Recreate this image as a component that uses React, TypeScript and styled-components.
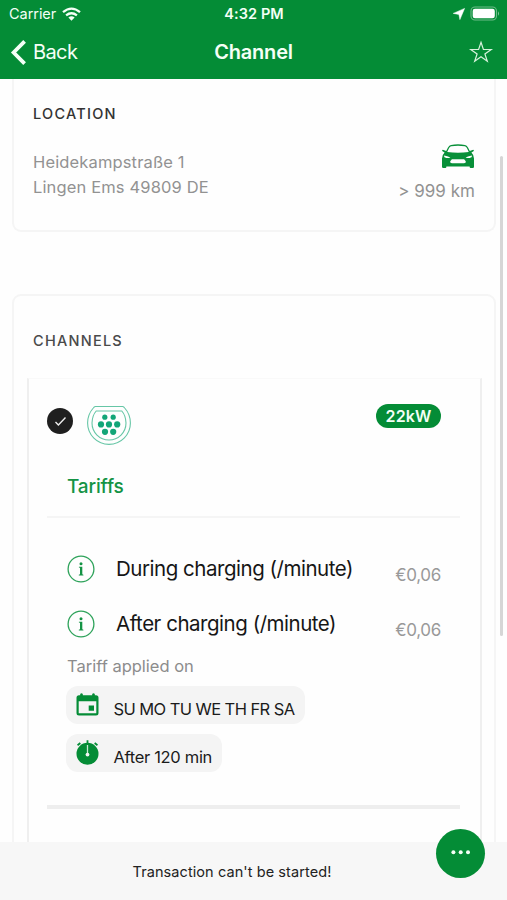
import React from "react";
import styled, { createGlobalStyle } from "styled-components";

const GREEN = "#048c36";

const GlobalStyle = createGlobalStyle`
  * { box-sizing: border-box; }
  body { margin: 0; background: #fff; font-family: Inter, "Liberation Sans", sans-serif; }
  svg { display: block; flex: none; overflow: visible; }
`;

const Screen = styled.div`
  position: relative;
  width: 507px;
  height: 900px;
  display: flex;
  flex-direction: column;
  overflow: hidden;
  background: #fefefe;
`;

const Header = styled.header`
  height: 79px;
  flex: none;
  background: ${GREEN};
  color: #f4fff6;
  display: flex;
  flex-direction: column;
`;

const StatusBar = styled.div`
  height: 27px;
  display: grid;
  grid-template-columns: 1fr auto 1fr;
  align-items: center;
  padding: 0 8px 0 9px;
`;

const Carrier = styled.div`
  display: flex;
  align-items: center;
  gap: 6px;
  font-size: 14.5px;
  line-height: 20px;
  letter-spacing: -0.05px;
`;

const Clock = styled.div`
  font-size: 14.5px;
  line-height: 20px;
  font-weight: 600;
  letter-spacing: 0.1px;
`;

const StatusIcons = styled.div`
  display: flex;
  justify-content: flex-end;
  align-items: center;
  gap: 5px;
`;

const NavBar = styled.nav`
  height: 50px;
  display: grid;
  grid-template-columns: 1fr auto 1fr;
  align-items: center;
  padding: 0 15px 0 11px;
`;

const BackButton = styled.div`
  display: flex;
  align-items: center;
  gap: 7px;
  font-size: 20px;
  line-height: 26px;
  letter-spacing: -0.6px;
`;

const NavTitle = styled.h1`
  margin: 0;
  padding-left: 4px;
  font-size: 20px;
  line-height: 26px;
  font-weight: 600;
  letter-spacing: -0.2px;
`;

const NavAction = styled.div`
  display: flex;
  justify-content: flex-end;
`;

const Content = styled.main`
  height: 763px;
  flex: none;
  overflow: hidden;
  padding: 0 11px 0 12px;
  display: flex;
  flex-direction: column;
`;

const Card = styled.section<{ $first?: boolean }>`
  flex: none;
  border: 2px solid #f5f5f5;
  border-radius: ${(p) => (p.$first ? "0 0 9px 9px" : "9px 9px 0 0")};
  border-top-width: ${(p) => (p.$first ? 0 : "2px")};
  height: ${(p) => (p.$first ? "153px" : "600px")};
  margin-bottom: ${(p) => (p.$first ? "62px" : 0)};
  padding-top: ${(p) => (p.$first ? "24px" : "34px")};
`;

const CardTitle = styled.h2<{ $soft?: boolean }>`
  margin: 0 0 0 19px;
  padding-top: 1px;
  font-size: 14.5px;
  line-height: 20px;
  font-weight: 500;
  letter-spacing: 1.25px;
  color: ${(p) => (p.$soft ? "#4a4a4a" : "#333")};
`;

const LocationRow = styled.div`
  display: flex;
  justify-content: space-between;
  padding: 20px 19px 0 19px;
`;

const Address = styled.address`
  font-style: normal;
  font-size: 16.5px;
  line-height: 24.5px;
  letter-spacing: 0.14px;
  color: #929292;
  padding-top: 6px;
`;

const Distance = styled.div`
  display: flex;
  flex-direction: column;
  align-items: flex-end;
  gap: 10px;
  font-size: 17px;
  line-height: 24px;
  letter-spacing: 0.02px;
  color: #929292;
`;

const Panel = styled.div`
  margin: 27px 12px 0 13px;
  height: 520px;
  border-left: 2px solid #efefef;
  border-right: 2px solid #efefef;
  border-top: 1px solid #f9f9f9;
  padding: 26px 20px 0 18px;
`;

const ChannelHead = styled.div`
  height: 69px;
  display: flex;
  align-items: flex-start;
  padding-right: 19px;
`;

const SelectedMark = styled.div`
  width: 26px;
  height: 26px;
  margin: 3px 14px 0 0;
  border-radius: 50%;
  background: #1f1f1f;
  display: flex;
  align-items: center;
  justify-content: center;
`;

const PowerBadge = styled.div`
  margin-left: auto;
  margin-top: -1px;
  width: 65px;
  height: 24px;
  border-radius: 12px;
  background: ${GREEN};
  color: #f4fff6;
  font-size: 16px;
  line-height: 24px;
  font-weight: 600;
  letter-spacing: 0.1px;
  text-align: center;
`;

const TariffTitle = styled.h3`
  margin: 0;
  padding-left: 20px;
  height: 44px;
  font-size: 19px;
  line-height: 26px;
  font-weight: 500;
  letter-spacing: -0.15px;
  color: #149344;
  border-bottom: 2px solid #f5f5f5;
`;

const TariffList = styled.div`
  padding-top: 23px;
`;

const TariffRow = styled.div`
  height: 55px;
  display: flex;
  align-items: center;
  padding: 0 19px 0 20px;
`;

const TariffName = styled.span`
  margin-left: 21px;
  font-size: 20.5px;
  line-height: 28px;
  letter-spacing: -0.47px;
  color: #161616;
  white-space: nowrap;
`;

const Price = styled.span`
  margin-left: auto;
  padding-top: 13px;
  font-size: 17px;
  line-height: 24px;
  letter-spacing: -0.3px;
  color: #999;
`;

const Applied = styled.p`
  margin: 3px 0 8px 20px;
  font-size: 16.5px;
  line-height: 24px;
  color: #8c8c8c;
`;

const Chip = styled.div<{ $w: number }>`
  width: ${(p) => p.$w}px;
  height: 38px;
  margin: 0 0 10px 19px;
  border-radius: 12px;
  background: #f4f4f4;
  display: flex;
  align-items: flex-start;
  padding: 7px 0 0 10px;
`;

const ChipText = styled.span<{ $ls: number }>`
  margin-left: 14.5px;
  padding-top: 4px;
  font-size: 16.5px;
  line-height: 24px;
  letter-spacing: ${(p) => p.$ls}px;
  color: #1b1b1b;
  white-space: nowrap;
`;

const TimerSlot = styled.div`
  margin-top: -1px;
`;

const EndRule = styled.div`
  margin-top: 33px;
  height: 4px;
  background: #eeeeee;
`;

const Footer = styled.footer`
  height: 58px;
  flex: none;
  background: #f7f7f7;
  padding: 19px 43px 0 0;
  text-align: center;
  font-size: 14.5px;
  line-height: 22px;
  letter-spacing: 0.08px;
  color: #222;
`;

const MoreButton = styled.div`
  position: absolute;
  left: 436px;
  top: 829px;
  width: 49px;
  height: 49px;
  border-radius: 50%;
  background: ${GREEN};
  display: flex;
  justify-content: center;
  padding-top: 21px;
`;

const ScrollThumb = styled.div`
  position: absolute;
  left: 500px;
  top: 156px;
  width: 3px;
  height: 480px;
  border-radius: 2px;
  background: #d6d6d6;
`;

const WifiIcon = () => (
  <svg width="19" height="14" viewBox="0 0 19 14" fill="none" stroke="#f4fff6" strokeWidth="2.3">
    <path d="M1 5.2Q9.5-2 18 5.2M4.1 8.4Q9.5 4 14.9 8.4" />
    <path d="M6.4 10.6Q9.5 8 12.6 10.6L9.5 13.8Z" fill="#f4fff6" stroke="none" />
  </svg>
);

const ArrowIcon = () => (
  <svg width="12" height="12" viewBox="0 0 12 12">
    <path d="M11.6.4L6.9 11.6L5.9 6.4L.2 5.4Z" fill="#fff" stroke="#fff" strokeWidth=".5" strokeLinejoin="round" />
  </svg>
);

const BatteryIcon = () => (
  <svg width="29" height="15" viewBox="0 0 29 15">
    <rect x="1" y="1" width="25.5" height="13" rx="4" fill="none" stroke="#6dbb88" strokeWidth="1.1" />
    <rect x="2.7" y="2.7" width="22.1" height="9.6" rx="2.3" fill="#fff" />
    <path d="M28 5.2Q30 7.5 28 9.8Z" fill="#82c69a" />
  </svg>
);

const ChevronIcon = () => (
  <svg width="15" height="25" viewBox="0 0 15 25" fill="none" stroke="#f4fff6" strokeWidth="3.8">
    <path d="M13.6 1.3L2.6 12.5L13.6 23.7" />
  </svg>
);

const StarIcon = () => (
  <svg width="22" height="22" viewBox="0 0 22 22" fill="none" stroke="#d8f3dd" strokeWidth="1.2">
    <path d="M11 1.3L13.4 8.5H21.2L14.9 13L17.3 20.3L11 15.8L4.7 20.3L7.1 13L.8 8.5H8.6Z" />
  </svg>
);

const CarIcon = () => (
  <svg width="34" height="25" viewBox="0 0 34 25">
    <path
      fill="#089039"
      fillRule="evenodd"
      d="M10 .9Q17-.3 24 .9Q25.8 1.2 27 3.5L28.8 6.9L32.2 5.8Q33.5 6 32.5 7.2L30.4 8.5Q32.9 10.8 33 14.5V22.8Q33 24 31.8 24H29.6Q28.6 24 28.6 22.4H5.4Q5.4 24 4.4 24H2.2Q1 24 1 22.8V14.5Q1.1 10.8 3.6 8.5L1.5 7.2Q.5 6 1.8 5.8L5.2 6.9L7 3.5Q8.2 1.2 10 .9Z
      M10.3 2.2Q9 2.4 8.1 4L6.2 7.9Q17 9.4 27.8 7.9L25.9 4Q25 2.4 23.7 2.2Q17 1.2 10.3 2.2Z
      M2.9 11.4Q2.8 13.6 5.3 14.1L9.4 14Q8 12 2.9 11.4Z
      M31.1 11.4Q31.2 13.6 28.7 14.1L24.6 14Q26 12 31.1 11.4Z
      M10.9 15.3H23.1L24.8 17.2Q25.2 19 23 19.2H11Q8.8 19 9.2 17.2Z"
    />
  </svg>
);

const CheckIcon = () => (
  <svg width="13" height="11" viewBox="0 0 13 11" fill="none" stroke="#eee" strokeWidth="1.4">
    <path d="M1.5 6L4.4 8.9L11.5 1.6" />
  </svg>
);

const DOTS = [
  [17.8, 12.2], [26.2, 12.2], [14, 19.4], [22, 19.4], [30.2, 19.4], [18, 26.8], [26.2, 26.8],
];

const ConnectorIcon = () => (
  <svg width="44" height="41" viewBox="0 0 44 41" fill="none" stroke="#66c6a6" strokeWidth="1.1">
    <path d="M8.3 1.5H35.7Q36.8 1.7 37.7 3Q43.4 9.5 43.4 18A21.4 21.4 0 0 1 .6 18Q.6 9.5 6.3 3Q7.2 1.7 8.3 1.5Z" />
    <path d="M9.2 6H34.8Q38.8 10.5 39 18A17 17 0 0 1 5 18Q5.2 10.5 9.2 6Z" />
    {DOTS.map(([x, y], i) => (
      <circle key={i} cx={x} cy={y} r={i < 2 ? 2.6 : 3.1} fill="#12a577" stroke="none" />
    ))}
  </svg>
);

const InfoIcon = () => (
  <svg width="28" height="28" viewBox="0 0 28 28">
    <circle cx="14" cy="14" r="12.9" fill="none" stroke="#2fa35b" strokeWidth="1.3" />
    <circle cx="14" cy="8.8" r="1.5" fill="#149344" />
    <path d="M11.9 11.8H15.3V19.2L16.4 19.8V20.5H11.8V19.8L13 19.2V12.8L11.9 12.5Z" fill="#149344" />
  </svg>
);

const CalendarIcon = () => (
  <svg width="23" height="23" viewBox="0 0 23 23">
    <path
      fill={GREEN}
      fillRule="evenodd"
      d="M4.2 1Q5.5-.3 6.8 1V2.2H16.2V1Q17.5-.3 18.8 1V2.2H20Q22.5 2.2 22.5 4.7V20Q22.5 22.5 20 22.5H3Q.5 22.5 .5 20V4.7Q.5 2.2 3 2.2H4.2ZM2.7 8.2V20.3H20.3V8.2ZM12.7 12.4H18V17.7H12.7Z"
    />
  </svg>
);

const TimerIcon = () => (
  <svg width="23" height="25" viewBox="0 0 23 25">
    <circle cx="11.5" cy="13.8" r="11" fill={GREEN} />
    <path d="M10.6.2H12.4V4H10.6ZM1 4.5L3.8 2.3L4.9 3.7L2.1 6ZM22 4.5L19.2 2.3L18.1 3.7L20.9 6Z" fill={GREEN} />
    <path d="M11.5 5V14" stroke="#c8e9d2" strokeWidth="1.3" />
    <circle cx="11.5" cy="14.6" r="1.9" fill="#f4f4f4" />
  </svg>
);

const DotsIcon = () => (
  <svg width="20" height="5" viewBox="0 0 20 5" fill="#f4fff6">
    <circle cx="2.4" cy="2.3" r="2" />
    <circle cx="9.7" cy="2.3" r="2" />
    <circle cx="17" cy="2.3" r="2" />
  </svg>
);

export default function App() {
  return (
    <>
      <GlobalStyle />
      <Screen>
        <Header>
          <StatusBar>
            <Carrier>Carrier<WifiIcon /></Carrier>
            <Clock>4:32 PM</Clock>
            <StatusIcons><ArrowIcon /><BatteryIcon /></StatusIcons>
          </StatusBar>
          <NavBar>
            <BackButton><ChevronIcon />Back</BackButton>
            <NavTitle>Channel</NavTitle>
            <NavAction><StarIcon /></NavAction>
          </NavBar>
        </Header>
        <Content>
          <Card $first>
            <CardTitle>LOCATION</CardTitle>
            <LocationRow>
              <Address>Heidekampstraße 1<br />Lingen Ems 49809 DE</Address>
              <Distance><CarIcon />&gt; 999 km</Distance>
            </LocationRow>
          </Card>
          <Card>
            <CardTitle $soft>CHANNELS</CardTitle>
            <Panel>
              <ChannelHead>
                <SelectedMark><CheckIcon /></SelectedMark>
                <ConnectorIcon />
                <PowerBadge>22kW</PowerBadge>
              </ChannelHead>
              <TariffTitle>Tariffs</TariffTitle>
              <TariffList>
                {["During charging (/minute)", "After charging (/minute)"].map((name) => (
                  <TariffRow key={name}>
                    <InfoIcon />
                    <TariffName>{name}</TariffName>
                    <Price>€0,06</Price>
                  </TariffRow>
                ))}
              </TariffList>
              <Applied>Tariff applied on</Applied>
              <Chip $w={239}>
                <CalendarIcon />
                <ChipText $ls={-0.58}>SU MO TU WE TH FR SA</ChipText>
              </Chip>
              <Chip $w={156}>
                <TimerSlot><TimerIcon /></TimerSlot>
                <ChipText $ls={-0.32}>After 120 min</ChipText>
              </Chip>
              <EndRule />
            </Panel>
          </Card>
        </Content>
        <Footer>Transaction can't be started!</Footer>
        <MoreButton><DotsIcon /></MoreButton>
        <ScrollThumb />
      </Screen>
    </>
  );
}
